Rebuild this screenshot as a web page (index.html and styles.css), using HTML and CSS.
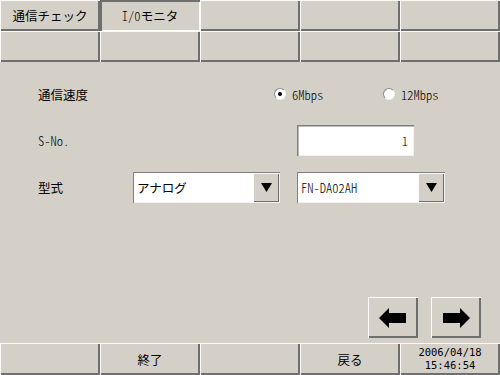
FILE: index.html
```html
<!DOCTYPE html>
<html lang="ja">
<head>
<meta charset="utf-8">
<title>I/Oモニタ</title>
<link rel="stylesheet" href="styles.css">
</head>
<body>
<div class="tabs">
  <div class="cell">通信チェック</div>
  <div class="cell on"><span class="en">I/0</span>モニタ</div>
  <div class="cell"></div>
  <div class="cell"></div>
  <div class="cell"></div>
  <div class="cell"></div>
  <div class="cell"></div>
  <div class="cell"></div>
  <div class="cell"></div>
  <div class="cell"></div>
</div>
<div class="content">
  <div class="row speed">
    <div class="label l-speed">通信速度</div>
    <div class="radio r1"><span class="dot checked"></span><span class="en">6Mbps</span></div>
    <div class="radio"><span class="dot"></span><span class="en">12Mbps</span></div>
  </div>
  <div class="row sno">
    <div class="label l-sno en">S-No.</div>
    <div class="field en">1</div>
  </div>
  <div class="row model">
    <div class="label l-model">型式</div>
    <div class="combo c1">
      <div class="val">アナログ</div>
      <div class="drop"><svg width="11" height="9" viewBox="0 0 11 9"><polygon points="0,0 11,0 5.5,9" fill="#000"/></svg></div>
    </div>
    <div class="combo c2">
      <div class="val en">FN-DA02AH</div>
      <div class="drop"><svg width="11" height="9" viewBox="0 0 11 9"><polygon points="0,0 11,0 5.5,9" fill="#000"/></svg></div>
    </div>
  </div>
  <div class="nav">
    <div class="navbtn"><svg width="28" height="20" viewBox="0 0 28 20"><polygon points="0,10 10,0 10,5 27,5 27,15 10,15 10,20" fill="#000"/></svg></div>
    <div class="navbtn"><svg width="28" height="20" viewBox="0 0 28 20"><polygon points="28,10 18,0 18,5 1,5 1,15 18,15 18,20" fill="#000"/></svg></div>
  </div>
</div>
<div class="bar">
  <div class="cell"></div>
  <div class="cell">終了</div>
  <div class="cell"></div>
  <div class="cell">戻る</div>
  <div class="cell date"><div class="dl">2006/04/18</div><div class="dl">15:46:54</div></div>
</div>
</body>
</html>
```

FILE: styles.css
```css
* { box-sizing: border-box; margin: 0; padding: 0; }
html, body { width: 500px; height: 375px; overflow: hidden; }
body {
  background: #d4d0c8;
  font-family: "Noto Sans CJK JP", "DejaVu Sans", sans-serif;
  font-size: 12.5px;
  color: #000;
  display: flex;
  flex-direction: column;
}
.en { font-feature-settings: "hwid" 1; font-weight: 300; }

.tabs {
  display: grid;
  grid-template-columns: repeat(5, 100px);
  grid-template-rows: 31px 31px;
}
.cell {
  display: flex;
  align-items: center;
  justify-content: center;
  box-shadow: inset 1px 1px #fbfaf7, inset -2px -2px #6f6f6f;
}
.cell.on {
  box-shadow: inset 2px 2px #6f6f6f, inset -1px -1px #fbfaf7;
}

.content {
  height: 281px;
  display: flex;
  flex-direction: column;
  padding: 18px 19px 5px 38px;
}
.row { display: flex; align-items: center; }
.speed { height: 28px; }
.sno { height: 31px; margin-top: 17px; }
.model { height: 31px; margin-top: 16px; }

.l-speed { width: 236px; }
.l-sno { width: 259px; }
.l-model { width: 95px; }

.radio { display: flex; align-items: center; gap: 6px; }
.r1 { width: 109px; }
.dot {
  width: 12px;
  height: 12px;
  border-radius: 50%;
  background: #fff;
  border: 1px solid;
  border-color: #8a8a8a #f4f4f4 #f4f4f4 #8a8a8a;
  display: flex;
  align-items: center;
  justify-content: center;
}
.dot.checked::after {
  content: "";
  width: 4px;
  height: 4px;
  border-radius: 50%;
  background: #000;
}

.field {
  width: 117px;
  height: 31px;
  background: #fff;
  box-shadow: inset 1px 1px #808080, inset 2px 2px #b8b8b8, inset -1px -1px #f2f2f2;
  display: flex;
  align-items: center;
  justify-content: flex-end;
  padding-right: 6px;
}

.combo {
  height: 31px;
  display: flex;
  background: #fff;
  box-shadow: inset 1px 1px #808080, inset -1px -1px #f2f2f2;
  padding: 1px;
}
.c1 { width: 147px; }
.c2 { width: 148px; margin-left: 17px; }
.val {
  flex: 1;
  display: flex;
  align-items: center;
  padding-left: 3px;
}
.drop {
  width: 26px;
  background: #d4d0c8;
  box-shadow: inset 1px 1px #fbfaf7, inset -1px -1px #6f6f6f;
  display: flex;
  align-items: center;
  justify-content: center;
}

.nav {
  margin-top: auto;
  display: flex;
  justify-content: flex-end;
  gap: 13px;
}
.navbtn {
  width: 50px;
  height: 41px;
  display: flex;
  align-items: center;
  justify-content: center;
  box-shadow: inset 1px 1px #fbfaf7, inset -2px -2px #6f6f6f;
}

.bar {
  display: grid;
  grid-template-columns: repeat(5, 100px);
  height: 32px;
}
.date {
  flex-direction: column;
  font-family: "DejaVu Sans Mono", monospace;
  font-size: 10.5px;
}
.dl {
  height: 13px;
  line-height: 13px;
}
```
